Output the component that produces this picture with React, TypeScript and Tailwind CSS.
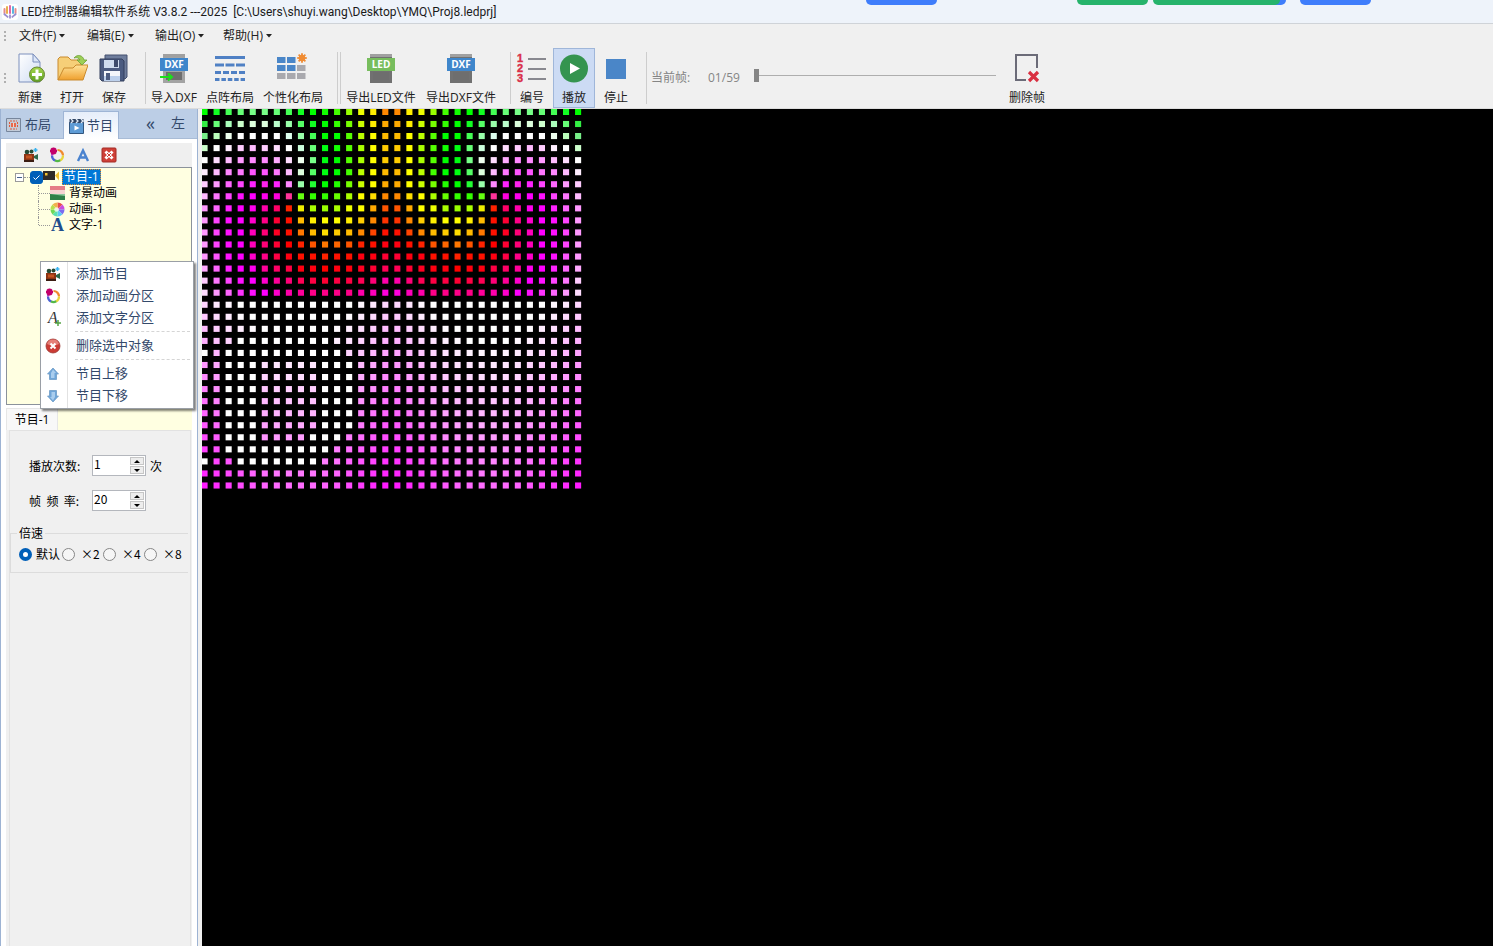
import { useState } from "react"
import type { ReactNode } from "react"

// left half of every row of the upper picture, the right half is its mirror
const upperRows = [
  "0f0 1f2 4f5 6f7 7f8 7f8 6f7 4f5 1f2 0f0 1f0 4f0 9f0 ef0 fe0 f80",
  "3e4 6f7 afb cfc dfd dfd bfc 9fa 5f6 1f2 0f0 3f0 7f0 cf0 fe0 fa0",
  "7e8 bfb efe fff fff fff fff dfe 9fa 4f5 0f0 0f0 5f0 bf0 ff0 fb0",
  "cfc fff fef fcf fbf fcf fdf fff cfd 6f7 0f1 1f0 5f0 af0 ff0 fc0",
  "fff fdf fbf f9f f8f f8f faf fdf efe 7f8 0f1 0f0 5f0 af0 ff0 fc0",
  "fef fbf f8f f7f f5f f5f f7f fbf dfd 5f6 0f1 0f0 4f0 bf0 ff0 fb0",
  "fcf f9f f6f f4f f2f f2e f2f f8f 9fa 2f3 0f0 2f0 7f0 cf0 ff0 fa0",
  "fbf f7f f4f f1f f0f f0e f0d f39 6f1 3f0 3f0 6f0 af0 ff0 fd0 f80",
  "f9f f6f f2f f0f f0e f0a f06 f20 ee0 af0 9f0 af0 ef0 ff0 fa0 f50",
  "f9f f4f f1f f0f f0c f08 f03 f10 fb0 fe0 ff0 ff0 fe0 fc0 f80 f30",
  "f9f f4f f1f f0f f0b f07 f02 f10 f70 fb0 fd0 fc0 fb0 f80 f40 f10",
  "f9f f4f f1f f0f f0b f07 f03 f00 f20 f50 f70 f60 f50 f20 f10 f01",
  "f9f f5f f1f f0f f0c f08 f04 f01 f10 f10 f20 f10 f10 f01 f01 f03",
  "faf f6f f2f f0f f0e f09 f06 f04 f01 f01 f00 f01 f01 f02 f03 f05",
  "fcf f7f f4f f1f f0f f0c f09 f07 f05 f04 f03 f04 f04 f05 f07 f0a",
  "fdf f9f f6f f3f f1f f0f f0c f0a f09 f08 f08 f08 f08 f0a f0b f0d",
]

// columns lit white by the text zone, keyed by row
const textCells: Record<number, number[]> = {
  19: [3, 4, 5, 6, 7, 8, 9, 10],
  20: [0, 2, 3, 4, 5, 6, 7, 8, 9, 10, 11],
  21: [2, 3, 4, 10, 11, 12],
  22: [2, 3, 4, 10, 11, 12],
  23: [2, 3, 4, 10, 11, 12],
  24: [2, 3, 4, 10, 11, 12],
  25: [2, 3, 4, 10, 11, 12],
  26: [2, 3, 4, 10, 11, 12],
  27: [2, 3, 4, 9, 10, 11],
  28: [2, 3, 4, 5, 6, 7, 8, 9, 10],
  29: [0, 3, 4, 5, 6, 7, 8, 9],
}

function ledColor(row: number, col: number) {
  if (row < 16) {
    return "#" + upperRows[row].split(" ")[col < 16 ? col : 31 - col]
  }
  if (textCells[row]?.includes(col)) return "#fff"
  const wave = Math.sin((Math.PI * ((col % 16) + 0.5)) / 16)
  const green = Math.min(255, Math.round(204 - 12.5 * (row - 16) + 92 * wave))
  return `rgb(255, ${green}, 255)`
}

function LedMatrix() {
  const cells = []
  for (let row = 0; row < 32; row++) {
    for (let col = 0; col < 32; col++) {
      cells.push(
        <rect
          key={`${row}-${col}`}
          x={-0.5 + col * 12.05}
          y={-0.1 + row * 12.05}
          width="6.1"
          height="6.1"
          fill={ledColor(row, col)}
        />,
      )
    }
  }
  return (
    <svg width="382" height="382" viewBox="0 0 382 382">
      {cells}
    </svg>
  )
}

/* ---------- icons ---------- */

function AppIcon() {
  return (
    <svg width="16" height="16" viewBox="0 0 16 16">
      <rect width="16" height="16" rx="3" fill="#fff" />
      <path d="M2.500 5v4M13.500 5v4" stroke="#e58b8b" strokeWidth="2" strokeLinecap="round" />
      <path d="M5 3v6" stroke="#e9b04c" strokeWidth="2" strokeLinecap="round" />
      <path d="M8 2v7" stroke="#e065a8" strokeWidth="2" strokeLinecap="round" />
      <path d="M11 3v6" stroke="#5ab6e0" strokeWidth="2" strokeLinecap="round" />
      <path d="M2 9.500c1 2 3 2 4 4M14 9.500c-1 2-3 2-4 4M8 10.500v4" stroke="#9a8fd0" strokeWidth="1.800" fill="none" />
    </svg>
  )
}

function NewIcon() {
  return (
    <svg width="32" height="32" viewBox="0 0 32 32">
      <defs>
        <linearGradient id="page" x1="0" y1="0" x2="1" y2="1">
          <stop offset="0" stopColor="#fff" />
          <stop offset="1" stopColor="#cfdcf2" />
        </linearGradient>
        <linearGradient id="plus" x1="0" y1="0" x2="0" y2="1">
          <stop offset="0" stopColor="#a8d84e" />
          <stop offset="1" stopColor="#5c9e22" />
        </linearGradient>
      </defs>
      <path d="M5 1h14l7 8v20H5z" fill="url(#page)" stroke="#7d90bd" />
      <path d="M19 1v8h7z" fill="#dde7f8" stroke="#7d90bd" />
      <circle cx="23" cy="21.500" r="7.500" fill="url(#plus)" stroke="#66852f" />
      <path d="M23 16.500v10M18 21.500h10" stroke="#fff" strokeWidth="3" />
    </svg>
  )
}

function OpenIcon() {
  return (
    <svg width="32" height="32" viewBox="0 0 32 32">
      <defs>
        <linearGradient id="folder" x1="0" y1="0" x2="0" y2="1">
          <stop offset="0" stopColor="#ffe39a" />
          <stop offset="1" stopColor="#efa02e" />
        </linearGradient>
      </defs>
      <path d="M2 27V6l2-2h8l3 3h10v5" fill="#f6cf78" stroke="#c98a2d" />
      <path d="M2 27l6-12h9l3-3h12l-5 15z" fill="url(#folder)" stroke="#c98a2d" strokeLinejoin="round" />
      <path d="M18 5c3-4 9-3 10 2h3l-5 5-5-5h3c-1-2-3-3-6-2z" fill="#9dcf57" stroke="#6ba032" strokeWidth=".8" />
    </svg>
  )
}

function SaveIcon() {
  return (
    <svg width="32" height="32" viewBox="0 0 32 32">
      <path d="M7 2h22v22l-2 2H7z" fill="#6e7d9c" stroke="#44506e" />
      <path d="M2 6h22l2 2v20H4l-2-2z" fill="#4b5b80" stroke="#333e5c" />
      <path d="M6 7h15v8H6z" fill="#cfdcee" />
      <path d="M16 7h4v7h-4z" fill="#3d4a6b" />
      <path d="M6 18h16v10H6z" fill="#f3f6fb" />
      <path d="M6 23h16v5H6z" fill="#bcd0ec" />
      <path d="M8 20h4v7H8z" fill="#4b5b80" />
    </svg>
  )
}

function FileBadgeIcon({ text, color, arrow }: { text: string; color: string; arrow?: boolean }) {
  return (
    <svg width="30" height="32" viewBox="0 0 30 32">
      <path d="M4 1h22v29H4z" fill={arrow ? "#a3a3a3" : "#717171"} />
      <path d="M4 1h22v3H4z" fill="#a0a0a0" />
      <path d="M7 19h16v8H7z" fill="#6e6e6e" />
      <path d="M1 5h28v13H1z" fill={color} />
      <text x="15" y="15" fontSize="10" fontWeight="bold" fill="#fff" textAnchor="middle" fontFamily="Open Sans, sans-serif">
        {text}
      </text>
      {arrow && <path d="M1 24h12M9 20.500l4 3.500-4 3.500" stroke="#1be01b" strokeWidth="2" fill="none" />}
    </svg>
  )
}

function DotLayoutIcon() {
  return (
    <svg width="32" height="32" viewBox="0 0 32 32" stroke="#4f80c4" strokeWidth="3">
      <path d="M1 4.500h30" />
      <path d="M1 12h30" strokeDasharray="9 1.500" />
      <path d="M1 19.500h30" strokeDasharray="6 2" />
      <path d="M1 26.500h30" strokeDasharray="4.500 1.900" />
    </svg>
  )
}

function CustomLayoutIcon() {
  const rays = [0, 45, 90, 135]
  return (
    <svg width="34" height="32" viewBox="0 0 34 32">
      <path d="M1 4h8.500v6H1zM11 4h8.500v6H11zM1 12h8.500v6H1zM11 12h8.500v6H11z" fill="#4a86c8" />
      <path d="M21 12h8.500v6H21zM1 20h8.500v6H1zM11 20h8.500v6H11zM21 20h8.500v6H21z" fill="#a9a9ae" />
      <circle cx="26" cy="5" r="3.200" fill="#f08c34" />
      {rays.map((angle) => (
        <path key={angle} d="M21.200 5h9.600" stroke="#f08c34" strokeWidth="1.800" transform={`rotate(${angle} 26 5)`} />
      ))}
    </svg>
  )
}

function NumberIcon() {
  return (
    <svg width="32" height="32" viewBox="0 0 32 32">
      <g fontSize="11" fontWeight="bold" fill="#d92f49" stroke="#d92f49" strokeWidth=".4" fontFamily="Liberation Sans, sans-serif">
        <text x="1" y="9">1</text>
        <text x="1" y="19">2</text>
        <text x="1" y="29">3</text>
      </g>
      <path d="M12 6h18M12 16h18M12 26h18" stroke="#66666f" strokeWidth="1.600" />
    </svg>
  )
}

function PlayIcon() {
  return (
    <svg width="32" height="32" viewBox="0 0 32 32">
      <circle cx="16" cy="15.500" r="14" fill="#34944f" />
      <path d="M12 10v11l10-5.500z" fill="#fff" />
    </svg>
  )
}

function StopIcon() {
  return (
    <svg width="32" height="32" viewBox="0 0 32 32">
      <path d="M6 6h20v20H6z" fill="#4a86c8" />
    </svg>
  )
}

function DeleteFrameIcon() {
  return (
    <svg width="32" height="32" viewBox="0 0 32 32">
      <path d="M26 15V2H5v25h10" fill="none" stroke="#6b6b78" strokeWidth="2" />
      <path d="M18 19l9 9M27 19l-9 9" stroke="#d92f40" strokeWidth="3.200" />
    </svg>
  )
}

function LayoutTabIcon() {
  return (
    <svg width="15" height="14" viewBox="0 0 15 14">
      <path d="M.5.5h14v13H.5z" fill="#c2cbd8" stroke="#77869c" />
      <path d="M4 3h7M4 11h7M3.500 4v6M11.500 4v6" stroke="#df5a3c" strokeDasharray="2 1" />
      <path d="M5 5h5v4H5z" fill="#e8674a" />
      <path d="M7.500 5v4" stroke="#f7d5c8" />
    </svg>
  )
}

function ProgramTabIcon() {
  return (
    <svg width="15" height="16" viewBox="0 0 15 16">
      <path d="M.5 4.500h14v11H.5z" fill="#5d9bd5" stroke="#33577f" />
      <path d="M.5 1h14v4H.5z" fill="#2f4564" />
      <path d="M2 1l2 2-2 2M7 1l2 2-2 2M12 1l2 2-2 2" stroke="#dfe9f5" strokeWidth="1.300" fill="none" />
      <path d="M5.500 7.500v5l5-2.500z" fill="#fff" />
    </svg>
  )
}

function CameraPlusIcon() {
  return (
    <svg width="16" height="16" viewBox="0 0 16 16">
      <circle cx="4" cy="5" r="2.300" fill="#244a35" />
      <circle cx="8.500" cy="4.500" r="2" fill="#244a35" />
      <path d="M1 7h10v7H1z" fill="#8c3414" />
      <path d="M3 8.500h6v3H3z" fill="#c4531f" />
      <path d="M11 9l4-2v6l-4-2z" fill="#2c6a4c" />
      <path d="M1 13h10v2H1z" fill="#3a1c12" />
      <path d="M12.500 1v4M10.500 3h4" stroke="#38b2ef" strokeWidth="1.600" />
    </svg>
  )
}

function RingIcon() {
  return (
    <svg width="16" height="16" viewBox="0 0 16 16" fill="none" strokeWidth="2.200">
      <path d="M8.500 3a5.500 5.500 0 0 1 5.500 5.500" stroke="#f08a2c" />
      <path d="M14 8.500a5.500 5.500 0 0 1-3 5" stroke="#e8d63a" />
      <path d="M11.200 13.300a5.500 5.500 0 0 1-5.400 0" stroke="#54b848" />
      <path d="M6 13.500a5.500 5.500 0 0 1-3-5" stroke="#4b62d4" />
      <path d="M3 8.500a5.500 5.500 0 0 1 1-3" stroke="#b13bc4" />
      <path d="M1 4h7M4.500.5v7M2 1.500l5 5M7 1.500l-5 5" stroke="#c2006a" />
    </svg>
  )
}

function LetterIcon() {
  return (
    <svg width="16" height="16" viewBox="0 0 16 16" fill="none" stroke="#4a83cf" strokeWidth="2.400">
      <path d="M3 14L8 3.500l5 10.500M5 10.500h6" />
    </svg>
  )
}

function RedSquareIcon() {
  return (
    <svg width="16" height="16" viewBox="0 0 16 16">
      <rect x="1" y="1" width="14" height="14" rx="1" fill="#cf4038" stroke="#a32a25" />
      <path d="M4.500 4.500l7 7M11.500 4.500l-7 7" stroke="#fff" strokeWidth="3" />
      <path d="M6 6l4 4M10 6l-4 4" stroke="#cf4038" strokeWidth="1" />
    </svg>
  )
}

function ProjectorIcon() {
  return (
    <svg width="17" height="14" viewBox="0 0 17 14">
      <path d="M0 1h12v9H0z" fill="#2f2b28" />
      <path d="M2 3h2.500v2.500H2z" fill="#f2c230" />
      <path d="M12 5.500l4-4v9z" fill="#f2c230" />
    </svg>
  )
}

function BackgroundIcon() {
  return (
    <svg width="15" height="14" viewBox="0 0 15 14">
      <path d="M0 0h15v4H0z" fill="#e57d86" />
      <path d="M0 4h15v4H0z" fill="#f5d3d2" />
      <path d="M0 8h15v6H0z" fill="#2f8048" />
      <path d="M0 8l15 2V8z" fill="#8ec79d" />
    </svg>
  )
}

function WheelIcon() {
  const slices = ["#e84d4d", "#c94de0", "#7b6cf0", "#5bc8f5", "#5be0b0", "#6fd857", "#b8e04e", "#f2b24c"]
  return (
    <svg width="15" height="15" viewBox="0 0 16 16">
      {slices.map((color, i) => (
        <path key={color} d="M8 8V.5A7.500 7.500 0 0 1 13.300 2.700z" fill={color} transform={`rotate(${i * 45} 8 8)`} />
      ))}
      <circle cx="7" cy="8" r="2.500" fill="#fff" opacity=".75" />
    </svg>
  )
}

function SerifLetter() {
  return <span className="w-[15px] text-center font-['Liberation_Serif',serif] text-[18px] leading-4 font-bold text-[#1f4e8c]">A</span>
}

function AddTextIcon() {
  return (
    <span className="relative w-4 font-['Liberation_Serif',serif] text-base leading-4 text-[#333] italic">
      A
      <svg className="absolute right-0 bottom-0" width="6" height="6" viewBox="0 0 6 6">
        <path d="M3 0v6M0 3h6" stroke="#55a445" strokeWidth="1.500" />
      </svg>
    </span>
  )
}

function RedRoundIcon() {
  return (
    <svg width="16" height="16" viewBox="0 0 16 16">
      <circle cx="8" cy="8" r="7" fill="#cb3b34" stroke="#9c3a36" strokeWidth=".8" />
      <path d="M2 6a6.300 6.300 0 0 1 12 0c-4 2-8 2-12 0z" fill="#e58078" />
      <path d="M5.500 5.500l5 5M10.500 5.500l-5 5" stroke="#fff" strokeWidth="2" />
    </svg>
  )
}

function BlueArrowIcon({ down }: { down?: boolean }) {
  return (
    <svg width="16" height="16" viewBox="0 0 16 16">
      <g transform={down ? "rotate(180 8 8)" : undefined}>
        <path d="M8 2l5.500 6H11.500v5.500h-7V8h-2z" fill="#6fa5d8" stroke="#6f9cc6" strokeWidth=".8" />
        <path d="M8 3.500L11 7H9.500v5H6V7z" fill="#a9cdee" />
      </g>
    </svg>
  )
}

/* ---------- window parts ---------- */

const menus = ["文件(F)", "编辑(E)", "输出(O)", "帮助(H)"]

function Grip() {
  return (
    <span className="flex w-[9px] shrink-0 flex-col items-center gap-[2px]">
      <i className="size-[2px] bg-[#b0b0b0]" />
      <i className="size-[2px] bg-[#b0b0b0]" />
      <i className="size-[2px] bg-[#b0b0b0]" />
    </span>
  )
}

function Divider() {
  return <span className="h-[52px] w-px shrink-0 bg-[#cdcdcd]" />
}

function ToolButton({ label, width, active, children }: { label: string; width: string; active?: boolean; children: ReactNode }) {
  return (
    <button
      className={`flex h-[60px] shrink-0 flex-col items-center gap-[5px] border pt-1 text-xs leading-4 whitespace-nowrap text-[#222] ${width} ${
        active ? "border-[#9fb6d9] bg-[#ccdbf4]" : "border-transparent"
      }`}
    >
      {children}
      {label}
    </button>
  )
}

function TitleBar() {
  return (
    <header className="relative flex h-6 items-center gap-[3px] border-b border-[#cfd3d8] bg-[#eef3fa] pl-[2px] font-['Roboto','Noto_Sans_CJK_SC',sans-serif] text-xs whitespace-pre text-[#1a1a1a]">
      <AppIcon />
      <h1>{"LED控制器编辑软件系统 V3.8.2 ---2025  [C:\\Users\\shuyi.wang\\Desktop\\YMQ\\Proj8.ledprj]"}</h1>
      <span className="absolute top-0 left-[866px] h-[5px] w-[71px] rounded-b-[10px] bg-[#3f7dfb]" />
      <span className="absolute top-0 left-[1077px] h-[5px] w-[71px] rounded-b-[10px] bg-[#26b36b]" />
      <span className="absolute top-0 left-[1200px] h-[5px] w-[86px] rounded-b-[10px] bg-[#3f7dfb]" />
      <span className="absolute top-0 left-[1153px] h-[5px] w-[127px] rounded-b-[10px] bg-[#26b36b]" />
      <span className="absolute top-0 left-[1300px] h-[5px] w-[71px] rounded-b-[10px] bg-[#3f7dfb]" />
    </header>
  )
}

function MenuBar() {
  return (
    <nav className="flex h-6 items-center text-xs text-[#222]">
      <Grip />
      {menus.map((menu) => (
        <button key={menu} className="flex h-6 w-[68px] shrink-0 items-center gap-[3px] pl-[10px] whitespace-nowrap">
          {menu}
          <svg width="6" height="4" viewBox="0 0 6 4">
            <path d="M0 0h6L3 3.500z" fill="#222" />
          </svg>
        </button>
      ))}
    </nav>
  )
}

function ToolBar() {
  const [frame, setFrame] = useState(1)

  return (
    <div className="flex h-[61px] items-center border-b border-[#dcdcdc]">
      <Grip />
      <ToolButton label="新建" width="w-[42px]"><NewIcon /></ToolButton>
      <ToolButton label="打开" width="w-[42px]"><OpenIcon /></ToolButton>
      <ToolButton label="保存" width="w-[42px]"><SaveIcon /></ToolButton>
      <div className="flex items-center pl-[10px]">
        <Divider />
        <ToolButton label="导入DXF" width="w-14"><FileBadgeIcon text="DXF" color="#3f86cb" arrow /></ToolButton>
        <ToolButton label="点阵布局" width="w-14"><DotLayoutIcon /></ToolButton>
        <ToolButton label="个性化布局" width="w-[70px]"><CustomLayoutIcon /></ToolButton>
      </div>
      <div className="flex items-center pl-[9px]">
        <span className="flex gap-[2px]">
          <Divider />
          <Divider />
        </span>
        <ToolButton label="导出LED文件" width="w-20"><FileBadgeIcon text="LED" color="#77bd5d" /></ToolButton>
        <ToolButton label="导出DXF文件" width="w-20"><FileBadgeIcon text="DXF" color="#3f86cb" /></ToolButton>
      </div>
      <div className="flex items-center pl-[9px]">
        <Divider />
        <ToolButton label="编号" width="w-[42px]"><NumberIcon /></ToolButton>
        <ToolButton label="播放" width="w-[42px]" active><PlayIcon /></ToolButton>
        <ToolButton label="停止" width="w-[42px]"><StopIcon /></ToolButton>
      </div>
      <div className="flex items-center pr-[10px] pl-[9px] text-xs whitespace-nowrap text-[#858585]">
        <Divider />
        <label htmlFor="frame" className="w-[61px] pl-1">当前帧:</label>
        <output htmlFor="frame" className="w-[46px]">{String(frame).padStart(2, "0")}/59</output>
        <input
          id="frame"
          type="range"
          min={1}
          max={59}
          value={frame}
          onChange={(e) => setFrame(Number(e.target.value))}
          className="mb-[6px] h-4 w-[242px] appearance-none bg-[linear-gradient(#aeaeae,#aeaeae)] bg-[length:100%_1px] bg-center bg-no-repeat [&::-webkit-slider-thumb]:h-[13px] [&::-webkit-slider-thumb]:w-[5px] [&::-webkit-slider-thumb]:appearance-none [&::-webkit-slider-thumb]:bg-[#858585]"
        />
      </div>
      <ToolButton label="删除帧" width="w-[42px]"><DeleteFrameIcon /></ToolButton>
    </div>
  )
}

const treeItems = [
  { label: "背景动画", icon: <BackgroundIcon /> },
  { label: "动画-1", icon: <WheelIcon /> },
  { label: "文字-1", icon: <SerifLetter /> },
]

function ProgramTree() {
  return (
    <div className="h-[238px] shrink-0 border border-[#8b929b] bg-[#ffffe1] pt-px pl-2 text-xs leading-4 text-black">
      <div className="flex h-4 items-center">
        <button aria-label="−" className="flex size-[9px] items-center justify-center border border-[#9a9a9a] bg-white">
          <i className="h-px w-[5px] bg-[#44608c]" />
        </button>
        <i className="w-[6px] border-t border-dotted border-[#999]" />
        <label className="flex items-center">
          <span className="relative flex">
            <input type="checkbox" defaultChecked className="peer size-[13px] appearance-none rounded-[3px] border border-[#005fb8] checked:bg-[#005fb8]" />
            <svg className="pointer-events-none absolute inset-0 hidden peer-checked:block" width="13" height="13" viewBox="0 0 13 13">
              <path d="M3.500 6.500l2 2 4-4" fill="none" stroke="#fff" />
            </svg>
          </span>
          <ProjectorIcon />
          <span className="ml-[2px] border border-dotted border-[#e08a30] bg-[#0078d7] px-px leading-[14px] text-white">节目-1</span>
        </label>
      </div>
      <ul className="ml-[23px]">
        {treeItems.map((item, i) => (
          <li key={item.label} className="flex h-4">
            <i className={`w-px border-l border-dotted border-[#999] ${i === treeItems.length - 1 ? "h-2" : "h-4"}`} />
            <i className="mt-2 h-px w-[11px] border-t border-dotted border-[#999]" />
            <span className="flex items-center gap-1">
              {item.icon}
              {item.label}
            </span>
          </li>
        ))}
      </ul>
    </div>
  )
}

const menuGroups = [
  [
    { label: "添加节目", icon: <CameraPlusIcon /> },
    { label: "添加动画分区", icon: <RingIcon /> },
    { label: "添加文字分区", icon: <AddTextIcon /> },
  ],
  [{ label: "删除选中对象", icon: <RedRoundIcon /> }],
  [
    { label: "节目上移", icon: <BlueArrowIcon /> },
    { label: "节目下移", icon: <BlueArrowIcon down /> },
  ],
]

function ContextMenu() {
  return (
    <div className="absolute top-[152px] left-[39px] z-10 w-[154px] border border-[#9a9fa6] bg-white pt-px pb-px text-[13px] text-[#33496b] shadow-[2px_2px_2px_rgba(0,0,0,0.5)]">
      <span className="absolute top-0 bottom-0 left-[26px] w-px bg-[#e2e2e2]" />
      {menuGroups.map((group, i) => (
        <div key={i}>
          {i > 0 && <hr className="my-[2px] mr-[3px] ml-[34px] border-dashed border-[#d5d5d5] pb-px" />}
          {group.map((item) => (
            <button key={item.label} className="flex h-[22px] w-full items-center gap-[15px] pl-1">
              {item.icon}
              {item.label}
            </button>
          ))}
        </div>
      ))}
    </div>
  )
}

function Spinner({ id, initial }: { id: string; initial: number }) {
  const [value, setValue] = useState(initial)

  return (
    <span className="flex h-[21px] w-[54px] border border-[#b4b7bd] bg-white p-px">
      <input id={id} value={value} onChange={(e) => setValue(Number(e.target.value) || 0)} className="h-[14px] w-9 min-w-0 leading-[14px]" />
      <span className="flex w-[14px] flex-col gap-px">
        <button type="button" onClick={() => setValue(value + 1)} aria-label="+" className="flex flex-1 items-center justify-center border border-[#c6c6c6] bg-[#ededed]">
          <svg width="6" height="3" viewBox="0 0 6 3"><path d="M0 3h6L3 0z" /></svg>
        </button>
        <button type="button" onClick={() => setValue(value - 1)} aria-label="-" className="flex flex-1 items-center justify-center border border-[#c6c6c6] bg-[#ededed]">
          <svg width="6" height="3" viewBox="0 0 6 3"><path d="M0 0h6L3 3z" /></svg>
        </button>
      </span>
    </span>
  )
}

const speeds = ["默认", "×2", "×4", "×8"]

function ProgramSettings() {
  const [speed, setSpeed] = useState("默认")

  return (
    <form className="mr-px ml-[3px] flex-1 border-x border-t border-[#e2e2e2] bg-[#f0f0f0] pt-6 font-['Noto_Sans_CJK_SC',sans-serif] text-xs text-black">
      <div className="flex items-center pl-[19px]">
        <label htmlFor="times" className="w-[63px]">播放次数:</label>
        <Spinner id="times" initial={1} />
        <span className="ml-1">次</span>
      </div>
      <div className="mt-[14px] flex items-center pl-[19px]">
        <label htmlFor="fps" className="w-[63px]">帧&nbsp; 频&nbsp; 率:</label>
        <Spinner id="fps" initial={20} />
      </div>
      <fieldset className="mt-[14px] mr-[2px] h-12 border border-r-0 border-[#dcdcdc] pl-2">
        <legend className="-ml-[2px] px-[2px] leading-4">倍速</legend>
        <div className="flex pt-[5px] leading-4">
          {speeds.map((item, i) => (
            <label key={item} className={`flex items-center whitespace-nowrap ${i === 0 ? "w-[43px] gap-1" : "w-[41px] gap-[6px]"}`}>
              <input
                type="radio"
                name="speed"
                checked={speed === item}
                onChange={() => setSpeed(item)}
                className="size-[13px] shrink-0 appearance-none rounded-full border border-[#868686] bg-[#f6f6f6] checked:border-4 checked:border-[#005fb8] checked:bg-white"
              />
              {item}
            </label>
          ))}
        </div>
      </fieldset>
    </form>
  )
}

function SidePanel() {
  return (
    <aside className="relative flex w-[198px] shrink-0 flex-col border-x border-[#9db3d3] bg-white">
      <div className="flex h-[30px] shrink-0 items-end border-b border-[#a9bcd6] bg-[#bccee6] text-[13px] text-[#33496b]">
        <button className="flex h-[26px] w-[62px] items-center gap-1 pl-[5px]">
          <LayoutTabIcon />
          布局
        </button>
        <button className="-mb-px flex h-7 w-[56px] items-center justify-center gap-[3px] border border-b-0 border-[#9fb5d5] bg-linear-to-b from-[#e6eefa] to-white">
          <ProgramTabIcon />
          节目
        </button>
        <button className="h-[30px] w-[52px] pl-[27px] text-left text-lg leading-[26px]">«</button>
        <button className="h-[30px] text-sm leading-[26px]">左</button>
      </div>
      <div className="flex min-h-0 flex-1 flex-col px-[5px] pt-1">
        <div className="flex h-6 shrink-0 items-center gap-[10px] bg-[#efefef] pl-[17px]">
          <button aria-label="添加节目"><CameraPlusIcon /></button>
          <button aria-label="添加动画分区"><RingIcon /></button>
          <button aria-label="添加文字分区"><LetterIcon /></button>
          <button aria-label="删除选中对象"><RedSquareIcon /></button>
        </div>
        <ProgramTree />
        <div className="mt-[3px] flex h-[22px] shrink-0 bg-[#ffffe1]">
          <button className="w-[52px] border border-b-0 border-[#e6e6e6] bg-[#f8f8f8] text-xs text-black">节目-1</button>
        </div>
        <div className="flex flex-1 bg-[#f0f0f0]">
          <ProgramSettings />
        </div>
      </div>
      <ContextMenu />
    </aside>
  )
}

export default function App() {
  return (
    <div className="flex h-screen flex-col overflow-hidden bg-[#f0f0f0] font-['Open_Sans','Noto_Sans_CJK_SC',sans-serif]">
      <TitleBar />
      <MenuBar />
      <ToolBar />
      <div className="flex min-h-0 flex-1">
        <SidePanel />
        <main className="ml-1 min-w-0 flex-1 bg-black">
          <LedMatrix />
        </main>
      </div>
    </div>
  )
}
